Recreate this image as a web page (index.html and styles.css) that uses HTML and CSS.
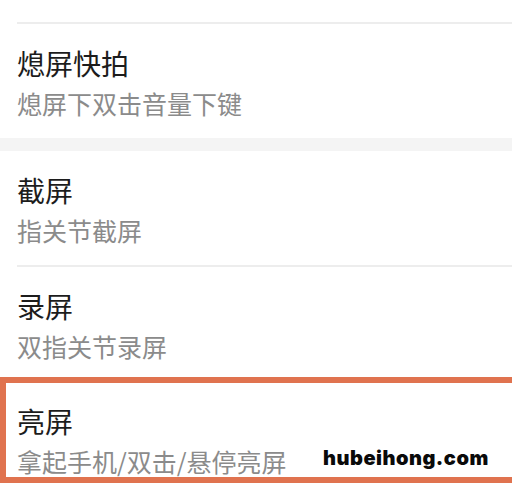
FILE: index.html
```html
<!DOCTYPE html>
<html>
<head>
<meta charset="utf-8">
<link rel="stylesheet" href="styles.css">
</head>
<body>
<div class="page">
  <div class="group first">
    <div class="item">
      <div class="title">熄屏快拍</div>
      <div class="sub">熄屏下双击音量下键</div>
    </div>
  </div>
  <div class="band"></div>
  <div class="group">
    <div class="item">
      <div class="title">截屏</div>
      <div class="sub">指关节截屏</div>
    </div>
    <div class="item">
      <div class="title">录屏</div>
      <div class="sub">双指关节录屏</div>
    </div>
    <div class="item highlight">
      <div class="title">亮屏</div>
      <div class="sub">拿起手机/双击/悬停亮屏</div>
      <div class="mark">hubeihong.com</div>
    </div>
  </div>
</div>
</body>
</html>
```
FILE: styles.css
```css
html, body {
  margin: 0;
  padding: 0;
  background: #ffffff;
}
.page {
  width: 512px;
  height: 483px;
  overflow: hidden;
  font-family: "Noto Sans CJK SC", "Noto Sans", sans-serif;
}
.group {
  display: flex;
  flex-direction: column;
}
.group.first {
  padding-top: 22px;
}
.item {
  position: relative;
  margin-left: 17px;
  padding: 23px 0 17px 0;
  border-top: 2px solid #ededed;
  height: 74px;
}
.band + .group .item:first-child {
  border-top: none;
}
.title {
  font-size: 28px;
  line-height: 32px;
  color: #1c1c1c;
}
.sub {
  margin-top: 8px;
  font-size: 25px;
  line-height: 32px;
  color: #8b8b8b;
}
.band {
  height: 13px;
  background: #f4f4f4;
}
.group .item:nth-child(2) {
  height: 70px;
}
.item.highlight {
  margin-left: 0;
  padding: 22px 0 0 11px;
  border: 6px solid #e0734f;
  border-right: none;
  height: 72px;
  width: 520px;
}
.mark {
  position: absolute;
  left: 317px;
  top: 63px;
  font-family: "Inter", sans-serif;
  font-weight: 900;
  font-size: 20px;
  line-height: 24px;
  letter-spacing: 0.5px;
  color: #0a0a0a;
}
```
